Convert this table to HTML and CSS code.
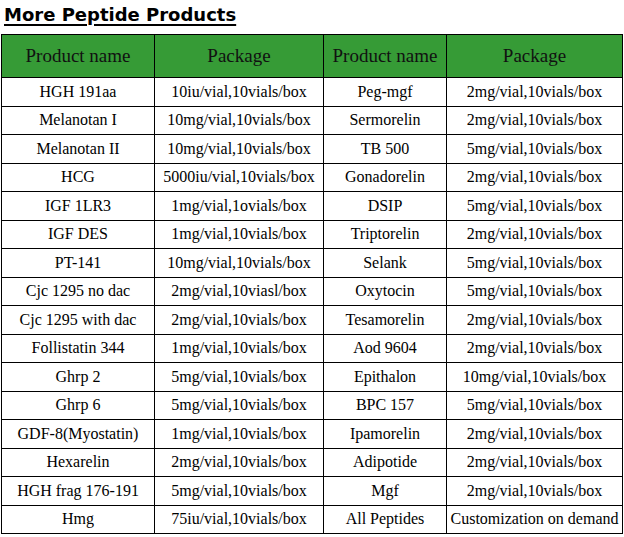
FILE: index.html
```html
<!DOCTYPE html>
<html>
<head>
<meta charset="utf-8">
<link rel="stylesheet" href="styles.css">
</head>
<body>
<div class="page">
  <h1 class="title">More Peptide Products</h1>
  <table class="products">
    <colgroup>
      <col class="c1"><col class="c2"><col class="c3"><col class="c4">
    </colgroup>
    <thead>
      <tr><th>Product name</th><th>Package</th><th>Product name</th><th>Package</th></tr>
    </thead>
    <tbody>
      <tr><td>HGH 191aa</td><td>10iu/vial,10vials/box</td><td>Peg-mgf</td><td>2mg/vial,10vials/box</td></tr>
      <tr><td>Melanotan I</td><td>10mg/vial,10vials/box</td><td>Sermorelin</td><td>2mg/vial,10vials/box</td></tr>
      <tr><td>Melanotan II</td><td>10mg/vial,10vials/box</td><td>TB 500</td><td>5mg/vial,10vials/box</td></tr>
      <tr><td>HCG</td><td>5000iu/vial,10vials/box</td><td>Gonadorelin</td><td>2mg/vial,10vials/box</td></tr>
      <tr><td>IGF 1LR3</td><td>1mg/vial,1ovials/box</td><td>DSIP</td><td>5mg/vial,10vials/box</td></tr>
      <tr><td>IGF DES</td><td>1mg/vial,10vials/box</td><td>Triptorelin</td><td>2mg/vial,10vials/box</td></tr>
      <tr><td>PT-141</td><td>10mg/vial,10vials/box</td><td>Selank</td><td>5mg/vial,10vials/box</td></tr>
      <tr><td>Cjc 1295 no dac</td><td>2mg/vial,10viasl/box</td><td>Oxytocin</td><td>5mg/vial,10vials/box</td></tr>
      <tr><td>Cjc 1295 with dac</td><td>2mg/vial,10vials/box</td><td>Tesamorelin</td><td>2mg/vial,10vials/box</td></tr>
      <tr><td>Follistatin 344</td><td>1mg/vial,10vials/box</td><td>Aod 9604</td><td>2mg/vial,10vials/box</td></tr>
      <tr><td>Ghrp 2</td><td>5mg/vial,10vials/box</td><td>Epithalon</td><td>10mg/vial,10vials/box</td></tr>
      <tr><td>Ghrp 6</td><td>5mg/vial,10vials/box</td><td>BPC 157</td><td>5mg/vial,10vials/box</td></tr>
      <tr><td>GDF-8(Myostatin)</td><td>1mg/vial,10vials/box</td><td>Ipamorelin</td><td>2mg/vial,10vials/box</td></tr>
      <tr><td>Hexarelin</td><td>2mg/vial,10vials/box</td><td>Adipotide</td><td>2mg/vial,10vials/box</td></tr>
      <tr><td>HGH frag 176-191</td><td>5mg/vial,10vials/box</td><td>Mgf</td><td>2mg/vial,10vials/box</td></tr>
      <tr><td>Hmg</td><td>75iu/vial,10vials/box</td><td>All Peptides</td><td>Customization on demand</td></tr>
    </tbody>
  </table>
</div>
</body>
</html>
```
FILE: styles.css
```css
html, body {
  margin: 0;
  padding: 0;
  background: #ffffff;
}
.page {
  padding: 0 0 0 1px;
}
.title {
  margin: 0;
  padding: 4px 0 0 3px;
  height: 29px;
  box-sizing: border-box;
  font-family: "DejaVu Sans", sans-serif;
  font-weight: bold;
  font-size: 18px;
  line-height: 21px;
  color: #000;
  text-decoration: underline;
  text-decoration-thickness: 2px;
  text-underline-offset: 3px;
}
.products {
  margin-top: 5px;
  border-collapse: collapse;
  table-layout: fixed;
  width: 621px;
  font-family: "Liberation Serif", "Times New Roman", serif;
  color: #000;
}
.c1 { width: 153px; }
.c2 { width: 169px; }
.c3 { width: 123px; }
.c4 { width: 176px; }
.products th,
.products td {
  border: 1px solid #000;
  text-align: center;
  padding: 0;
  white-space: nowrap;
  overflow: hidden;
}
.products th {
  background: #369b36;
  font-weight: normal;
  font-size: 19px;
  height: 42px;
  color: #111;
}
.products td {
  font-size: 16px;
  height: 27.5px;
}
```
